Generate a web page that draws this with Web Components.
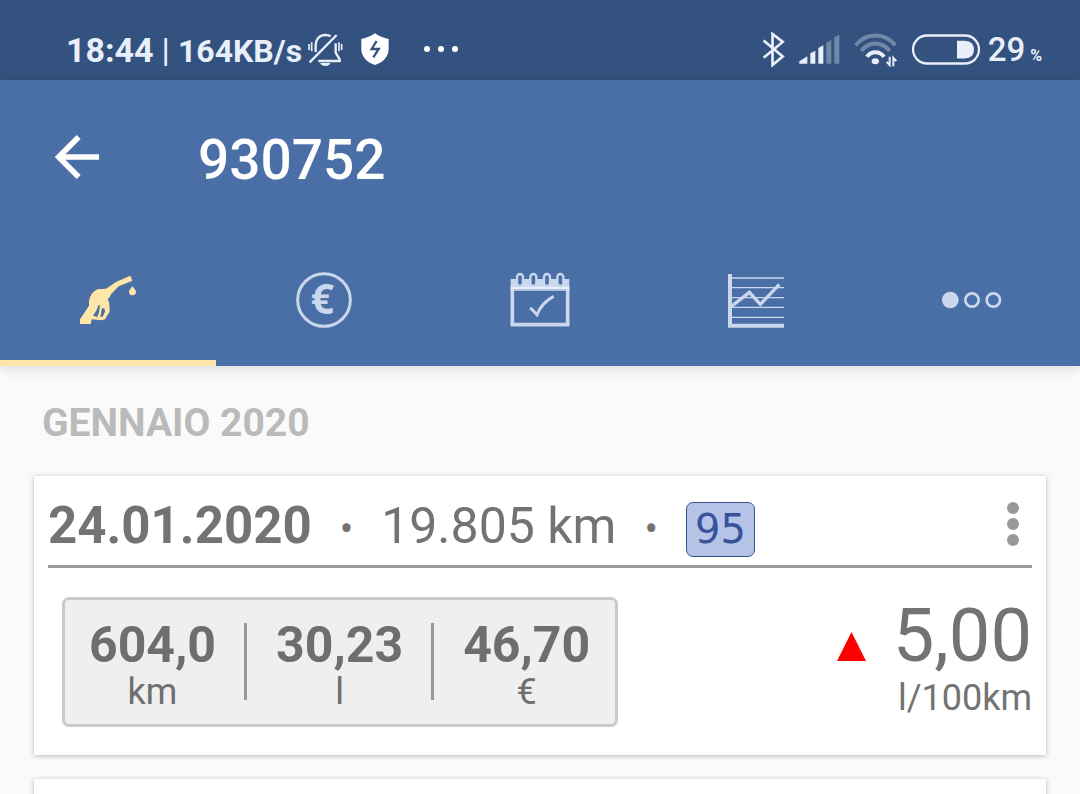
<!DOCTYPE html>
<html lang="it">
<head>
<meta charset="utf-8">
<meta name="viewport" content="width=device-width, initial-scale=1">
<title>930752</title>
<style>
:root {
	--status: #34527f;
	--primary: #4a6ea6;
	--accent: #fee6a6;
	--icon: #cad7ed;
	--text: #737373;
	--line: #999;
}

body {
	margin: 0;
	height: 100vh;
	display: flex;
	flex-direction: column;
	background: #fafafa;
	color: var(--text);
	font-family: Roboto, sans-serif;
}

main {
	flex: 1;
	min-height: 0;
	overflow: hidden;
	padding: 0 34px;
}

h2 {
	margin: 35px 8px 31px;
	font-size: 39px;
	line-height: 44px;
	font-weight: 700;
	color: #bababa;
}
</style>
</head>
<body>
<status-bar time="18:44" speed="164KB/s" battery="29"></status-bar>
<app-header>
	<span slot="title">930752</span>
	<app-tab label="Rifornimenti" selected>
		<svg width="56" height="56" viewBox="60 36 168 168" fill="currentColor">
			<path fill-rule="evenodd" d="M60 192V178L87 137V122Q92 98 112 88L138 86L168 66L211 47L217 62L176 79L153 103L149 112L143 117L148 130L149 155L135 178L124 181L95 178L92 192ZM120 136H115L110 150L99 167L112 171L117 157ZM126 144L134 146L135 155L128 170L121 170Z"/>
			<path d="M217 78C220 85 228 89 228 95A10.500 10.500 0 0 1 207 95C207 89 214 85 217 78Z"/>
		</svg>
	</app-tab>
	<app-tab label="Spese">
		<svg width="56" height="56" viewBox="709 36 168 168">
			<circle cx="793" cy="120" r="79" fill="none" stroke="currentColor" stroke-width="9"/>
			<text x="788" y="163" text-anchor="middle" font-family="Noto Sans, sans-serif" font-weight="700" font-size="122" fill="currentColor">€</text>
		</svg>
	</app-tab>
	<app-tab label="Promemoria">
		<svg width="60" height="56" viewBox="61 36 180 168" fill="none" stroke="currentColor">
			<path d="M63 57H239V84H63Z" fill="currentColor" stroke="none"/>
			<path d="M68 84V194H234V84" stroke-width="11"/>
			<path d="M63 84H239" stroke="#e8f0fb" stroke-width="8"/>
			<path d="M63 90H239" stroke-width="5"/>
			<g fill="#4a6ea6" stroke-width="7">
				<rect x="82" y="42" width="18" height="36" rx="9"/>
				<rect x="122" y="42" width="18" height="36" rx="9"/>
				<rect x="163" y="42" width="18" height="36" rx="9"/>
				<rect x="203" y="42" width="18" height="36" rx="9"/>
			</g>
			<path d="M122 143L142 164Q154 130 192 109" stroke-width="9"/>
		</svg>
	</app-tab>
	<app-tab label="Grafici">
		<svg width="56" height="56" viewBox="714 36 168 168" fill="none" stroke="currentColor">
			<path d="M720 42V197H882" stroke-width="12"/>
			<path d="M724 54H882M724 83H882M724 113H882M724 142H882M724 172H882" stroke-width="4"/>
			<path d="M722 141L778 97L811 133L868 73" stroke-width="10"/>
		</svg>
	</app-tab>
	<app-tab label="Altro">
		<svg width="60" height="20" viewBox="66 60 180 60" fill="none" stroke="currentColor" stroke-width="8">
			<circle cx="91" cy="90" r="21" fill="currentColor"/>
			<circle cx="156" cy="90" r="20"/>
			<circle cx="220" cy="90" r="20"/>
		</svg>
	</app-tab>
</app-header>
<main>
	<h2>GENNAIO 2020</h2>
	<paper-card>
		<fuel-entry date="24.01.2020" odometer="19.805 km" fuel="95" average="5,00" average-unit="l/100km">
			<stat-cell value="604,0" unit="km"></stat-cell>
			<stat-cell value="30,23" unit="l"></stat-cell>
			<stat-cell value="46,70" unit="€"></stat-cell>
		</fuel-entry>
	</paper-card>
	<paper-card></paper-card>
</main>

<script>
function attach(el, html) {
	const template = document.createElement('template')
	template.innerHTML = html
	el.attachShadow({ mode: 'open' }).append(template.content.cloneNode(true))
}

class StatusBar extends HTMLElement {
	connectedCallback() {
		attach(this, `
<style>
:host {
	display: flex;
	justify-content: space-between;
	align-items: center;
	box-sizing: border-box;
	height: 80px;
	padding: 18px 38px 0 66px;
	background: var(--status);
	color: #e9eff9;
}
div { display: flex; align-items: center; }
svg { display: block; }
.texts { align-items: baseline; gap: 8px; padding-top: 2px; font-weight: 700; }
.time { font-size: 34px; }
.bar { font-size: 34px; font-weight: 400; }
.speed { font-size: 32px; }
.icons { gap: 18px; margin-left: 6px; }
.more { margin-left: 16px; }
.right { gap: 14px; }
.level { align-items: baseline; gap: 5px; font-weight: 500; margin-left: -6px; }
.num { font-size: 33px; }
.pct { font-size: 16px; font-weight: 700; }
</style>
<div>
	<div class="texts">
		<span class="time">${this.getAttribute('time')}</span>
		<span class="bar">|</span>
		<span class="speed">${this.getAttribute('speed')}</span>
	</div>
	<div class="icons">
		<svg width="35" height="35" viewBox="23 36 105 105" fill="none" stroke="currentColor" stroke-width="7">
			<path d="M46 96V78C46 56 58 45 76 45C82 45 86 46 91 49M106 70V98L118 118V123H54M28 127L109 45"/>
			<path d="M26 72V90M34 67V94M116 67V94M124 72V90" stroke-width="5"/>
			<path d="M60 129H90A15 9 0 0 1 60 129Z" fill="currentColor" stroke="none"/>
		</svg>
		<svg width="28" height="32" viewBox="183 38 84 96">
			<path fill="#fff" d="M225 39Q243 52 266 56V86C266 108 250 126 225 134C200 126 184 108 184 86V56Q207 52 225 39Z"/>
			<path d="M230 62L215 86H236L220 111" fill="none" stroke="#34527f" stroke-width="7"/>
		</svg>
		<svg class="more" width="36" height="8" viewBox="0 0 36 8" fill="#fff">
			<circle cx="4" cy="4" r="3"/><circle cx="18" cy="4" r="3"/><circle cx="32" cy="4" r="3"/>
		</svg>
	</div>
</div>
<div class="right">
	<svg width="23" height="35" viewBox="37 34 68 106" fill="none" stroke="currentColor" stroke-width="8">
		<path d="M41 60L99 108L68 134V40L99 64L41 112"/>
	</svg>
	<svg width="41" height="30" viewBox="143 40 123 90" fill="currentColor">
		<path d="M144 129V122L168 107V129ZM177 129V98L192 90V129ZM201 129V82L216 74V129Z"/>
		<path d="M225 129V66L240 58V129ZM249 129V50L264 42V129Z" opacity=".35"/>
	</svg>
	<svg width="44" height="35" viewBox="311 38 132 104" fill="none" stroke="currentColor" stroke-width="12">
		<path d="M316 77Q340 48 375 48T435 77M333 94Q350 72 375 72T418 94" opacity=".35"/>
		<path d="M350 112Q358 98 375 98T401 112"/>
		<ellipse cx="375" cy="125" rx="11" ry="9" fill="currentColor" stroke="none"/>
		<path d="M418 112V137L409 127M429 140V115L438 125" stroke-width="6"/>
	</svg>
	<svg width="68" height="31" viewBox="486 40 204 92">
		<rect x="489" y="44" width="198" height="84" rx="42" fill="none" stroke="currentColor" stroke-width="7"/>
		<path d="M621 60H645Q672 62 672 86Q672 111 645 113H621Z" fill="currentColor"/>
	</svg>
	<div class="level">
		<span class="num">${this.getAttribute('battery')}</span>
		<span class="pct">%</span>
	</div>
</div>`)
	}
}

class AppHeader extends HTMLElement {
	connectedCallback() {
		attach(this, `
<style>
:host {
	display: block;
	position: relative;
	z-index: 1;
	background: var(--primary);
	box-shadow: 0 2px 12px rgba(0, 0, 0, .15);
}
.toolbar {
	display: flex;
	align-items: center;
	gap: 99px;
	height: 154px;
	padding: 0 55px;
	color: #fff;
}
button {
	display: block;
	padding: 0;
	border: 0;
	background: none;
	color: inherit;
}
svg { display: block; }
h1 {
	margin: 6px 0 0;
	font-size: 55px;
	line-height: 64px;
	font-weight: 500;
}
nav {
	display: grid;
	grid-template-columns: repeat(5, 1fr);
}
</style>
<div class="toolbar">
	<button aria-label="Indietro">
		<svg width="44" height="44" viewBox="46 45 132 132" fill="none" stroke="currentColor" stroke-width="17">
			<path d="M117 51L57 111L117 171M57 111H178"/>
		</svg>
	</button>
	<h1><slot name="title"></slot></h1>
</div>
<nav><slot></slot></nav>`)
	}
}

class AppTab extends HTMLElement {
	connectedCallback() {
		attach(this, `
<style>
:host { display: block; color: var(--icon); }
:host([selected]) { color: var(--accent); }
button {
	display: flex;
	align-items: center;
	justify-content: center;
	box-sizing: border-box;
	width: 100%;
	height: 132px;
	padding: 6px 0 0;
	border: 0;
	border-bottom: 6px solid transparent;
	background: none;
	color: inherit;
}
:host([selected]) button { border-color: var(--accent); }
</style>
<button aria-label="${this.getAttribute('label')}"><slot></slot></button>`)
	}
}

class PaperCard extends HTMLElement {
	connectedCallback() {
		attach(this, `
<style>
:host {
	display: block;
	box-sizing: border-box;
	min-height: 279px;
	margin-bottom: 24px;
	padding: 0 14px;
	background: #fff;
	box-shadow: 0 1px 5px rgba(0, 0, 0, .28);
}
</style>
<slot></slot>`)
	}
}

class StatCell extends HTMLElement {
	connectedCallback() {
		attach(this, `
<style>
:host { display: flex; }
:host(:not(:first-of-type))::before {
	content: '';
	width: 3px;
	margin: 3px 29px 14px 28px;
	background: var(--line);
}
div { text-align: center; }
b { display: block; font-size: 50px; line-height: 50px; }
span { display: block; font-size: 36px; line-height: 44px; }
</style>
<div>
	<b>${this.getAttribute('value')}</b>
	<span>${this.getAttribute('unit')}</span>
</div>`)
	}
}

class FuelEntry extends HTMLElement {
	connectedCallback() {
		attach(this, `
<style>
:host { display: block; }
header {
	display: flex;
	align-items: baseline;
	padding: 20px 0 8px;
	border-bottom: 3px solid var(--line);
	font-size: 50px;
	line-height: 60px;
}
b { font-size: 51px; }
.dot { margin: 0 28px; font-size: 40px; line-height: 50px; }
.fuel {
	box-sizing: border-box;
	padding: 0 8px;
	border: 1px solid #3c5290;
	border-radius: 7px;
	background: #b4c3e6;
	color: #38539a;
	font-family: "DejaVu Sans", sans-serif;
	font-size: 40px;
	line-height: 53px;
}
button {
	align-self: center;
	margin-left: auto;
	padding: 0 13px 5px;
	border: 0;
	background: none;
	color: var(--line);
}
svg { display: block; }
.body {
	display: flex;
	justify-content: space-between;
	align-items: flex-start;
	padding: 29px 0 28px 14px;
}
.stats {
	display: flex;
	padding: 20px 25px 10px 24px;
	border: 3px solid #cacaca;
	border-radius: 7px;
	background: #efefef;
	color: #6e6e6e;
}
.average { text-align: right; }
.value {
	display: flex;
	align-items: baseline;
	justify-content: flex-end;
	gap: 27px;
	font-size: 74px;
	line-height: 78px;
}
.unit { font-size: 36px; line-height: 46px; }
</style>
<header>
	<b>${this.getAttribute('date')}</b>
	<span class="dot">•</span>
	<span>${this.getAttribute('odometer')}</span>
	<span class="dot">•</span>
	<span class="fuel">${this.getAttribute('fuel')}</span>
	<button aria-label="Menu">
		<svg width="12" height="44" viewBox="0 0 12 44" fill="currentColor">
			<circle cx="6" cy="6" r="6"/><circle cx="6" cy="22" r="6"/><circle cx="6" cy="38" r="6"/>
		</svg>
	</button>
</header>
<div class="body">
	<div class="stats"><slot></slot></div>
	<div class="average">
		<div class="value">
			<svg width="29" height="29" viewBox="0 0 29 29"><path fill="#f00" d="M14.500 0L29 29H0Z"/></svg>
			<span>${this.getAttribute('average')}</span>
		</div>
		<div class="unit">${this.getAttribute('average-unit')}</div>
	</div>
</div>`)
	}
}

customElements.define('status-bar', StatusBar)
customElements.define('app-header', AppHeader)
customElements.define('app-tab', AppTab)
customElements.define('paper-card', PaperCard)
customElements.define('stat-cell', StatCell)
customElements.define('fuel-entry', FuelEntry)
</script>
</body>
</html>
